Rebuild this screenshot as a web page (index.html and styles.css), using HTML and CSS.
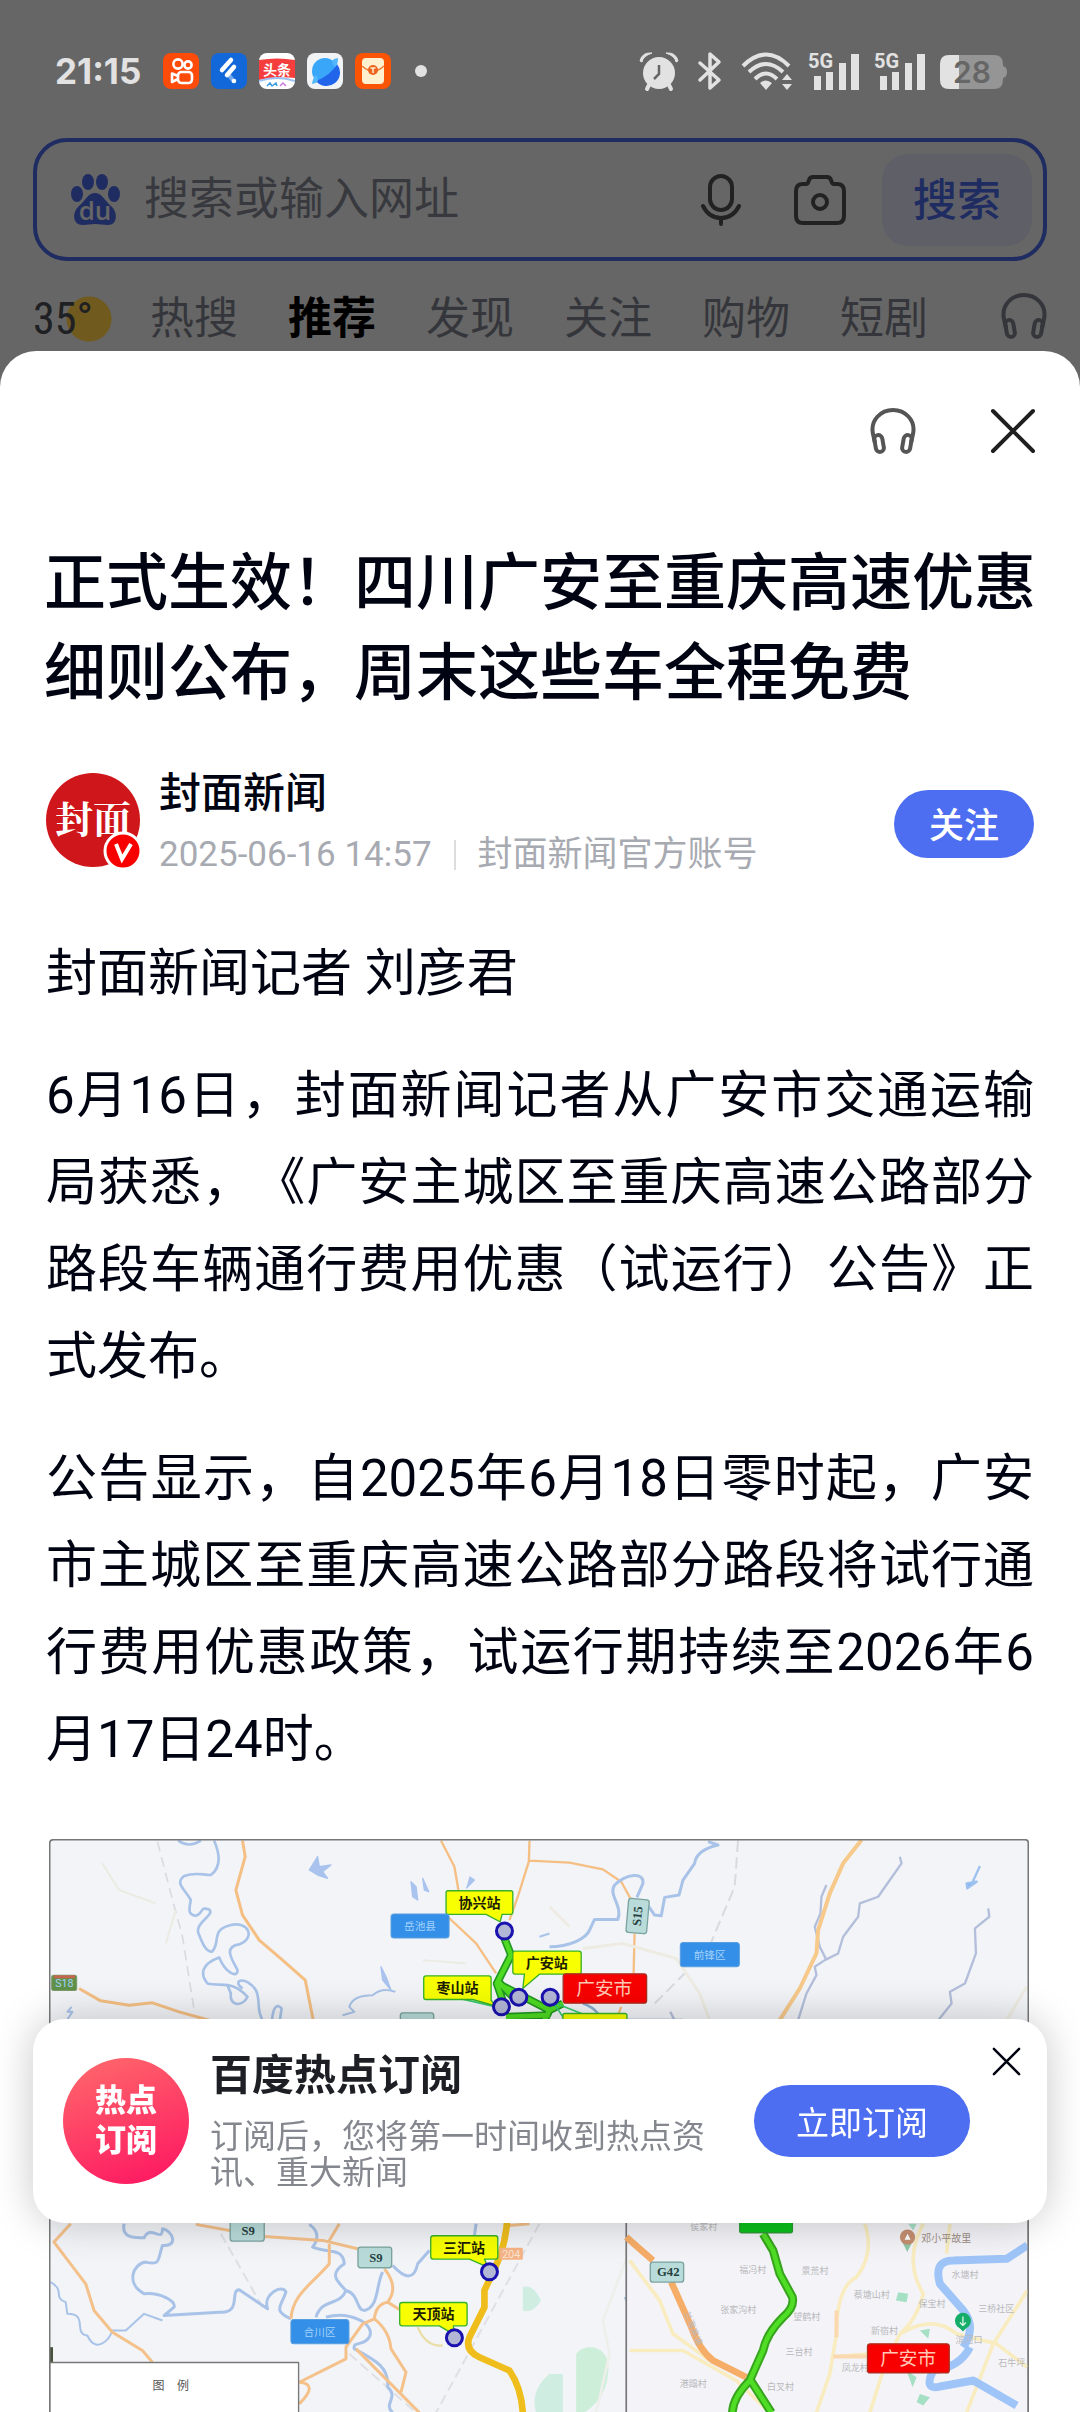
FILE: index.html
```html
<!DOCTYPE html>
<html lang="zh-CN">
<head>
<meta charset="UTF-8" />
<meta name="viewport" content="width=device-width, initial-scale=1" />
<title>正式生效！四川广安至重庆高速优惠细则公布</title>
<link rel="stylesheet" href="styles.css">
</head>
<body>

<svg class="defs" aria-hidden="true">
  <symbol id="headphones" viewBox="0 0 46 46">
    <path d="M5 35 L3 26 C0 12 11 2 23 2 C35 2 46 12 43 26 L41 35" fill="none" stroke="currentColor" stroke-width="4"/>
    <rect x="5" y="27" width="8" height="17" rx="4" fill="none" stroke="currentColor" stroke-width="4" transform="rotate(-10 9 35)"/>
    <rect x="33" y="27" width="8" height="17" rx="4" fill="none" stroke="currentColor" stroke-width="4" transform="rotate(10 37 35)"/>
  </symbol>
  <symbol id="close" viewBox="0 0 46 46">
    <path d="M3 3 L43 43 M43 3 L3 43" fill="none" stroke="currentColor" stroke-width="4" stroke-linecap="round"/>
  </symbol>
</svg>

<!-- status bar -->
<div class="statusbar">
  <span class="clock">21:15</span>
  <div class="notifications">
    <svg viewBox="0 0 36 36"><rect width="36" height="36" rx="8" fill="#ff4b0a"/><g fill="none" stroke="#fff" stroke-width="2.6"><circle cx="15" cy="11" r="4.6"/><circle cx="25" cy="12" r="3.6"/><rect x="15" y="19" width="14" height="11" rx="3.5"/><path d="M15 23 L9 20.500 V29 L15 26" stroke-linejoin="round"/></g></svg>
    <svg viewBox="0 0 36 36"><rect width="36" height="36" rx="8" fill="#1268d8"/><path d="M18 22 L23 29" stroke="#75a9ee" stroke-width="4"/><g stroke="#fff" stroke-width="4.500" stroke-linecap="round"><path d="M20 7 L11 17 M23 14 L16 22"/><path d="M23 28 L23 28"/></g></svg>
    <svg viewBox="0 0 36 36"><rect width="36" height="36" rx="8" fill="#fff"/><path d="M0 7 Q18 4 36 7 V25 Q18 23 0 27 Z" fill="#f63d3d"/><path d="M0 28 Q18 22 36 28" fill="none" stroke="#9cc3f6" stroke-width="2"/><text x="18" y="22" class="toutiao">头条</text><path d="M8 33 l3 -3 l2 3 l4 -3 l1 3" fill="none" stroke="#3d9be0" stroke-width="1.500"/><path d="M21 33 l3 -3 l3 3" fill="none" stroke="#c87be0" stroke-width="1.500"/></svg>
    <svg viewBox="0 0 36 36"><rect width="36" height="36" rx="8" fill="#f1f3f5"/><circle cx="18" cy="18" r="13" fill="#3aa6fa"/><path d="M9 28 Q24 22 30 11 A13 13 0 0 1 9 28" fill="#2166ea"/><path d="M5 31 Q6 24 9 22 Q13 27 9 30 Z M31 5 Q31 12 28 14 Q23 9 27 6 Z" fill="#52b8fb"/></svg>
    <svg viewBox="0 0 36 36"><rect width="36" height="36" rx="8" fill="#fb5405"/><rect x="7" y="5" width="22" height="26" rx="4" fill="#fff0cf"/><path d="M7 13 Q18 23 29 13" fill="none" stroke="#f07a35" stroke-width="1.500"/><circle cx="18" cy="17" r="5" fill="#ee6420"/><path d="M15.500 15h5M18 15v5" stroke="#fff0cf" stroke-width="1.500"/></svg>
  </div>
  <span class="more-dot"></span>
  <div class="system-icons">
    <svg class="icon-alarm" viewBox="0 0 38 38" fill="currentColor"><circle cx="19" cy="21" r="16"/><path d="M0 9 Q2 0 12 1 Q3 4 2 10 Z M38 9 Q36 0 26 1 Q35 4 36 10 Z" stroke="currentColor" stroke-width="1"/><path d="M9 33 L7 37 M29 33 L31 37" stroke="currentColor" stroke-width="4" stroke-linecap="round"/><path d="M19 13 V22 L14 27" fill="none" stroke="#666" stroke-width="2.500"/></svg>
    <svg class="icon-bluetooth" viewBox="0 0 33 38"><path d="M7 11 L26 28 L17 36 V2 L26 10 L7 28" fill="none" stroke="currentColor" stroke-width="3.500" stroke-linejoin="round" stroke-linecap="round"/></svg>
    <svg class="icon-wifi" viewBox="0 0 52 38"><g fill="none" stroke="currentColor" stroke-width="4"><path d="M2 14 Q25 -9 48 14"/><path d="M8 20 Q25 4 42 20"/><path d="M14 27 Q25 16 36 27"/></g><path d="M19 31 Q25 26 31 31 L25 38 Z M41 28 L46 22 L51 28 Z M41 32 L46 38 L51 32 Z" fill="currentColor"/></svg>
    <svg class="icon-signal" viewBox="0 0 51 38"><path d="M6 24h7v14H6z M18 20h7v18h-7z M31 11h7v27h-7z M43 2h8v36h-8z" fill="currentColor"/><text x="0" y="16" class="signal-text">5G</text></svg>
    <svg class="icon-signal" viewBox="0 0 51 38"><path d="M6 24h7v14H6z M18 20h7v18h-7z M31 11h7v27h-7z M43 2h8v36h-8z" fill="currentColor"/><text x="0" y="16" class="signal-text">5G</text></svg>
    <svg class="icon-battery" viewBox="0 0 67 38"><path d="M10 3 H54 Q63 3 63 12 V14 Q67 15 67 20 Q67 25 63 26 V28 Q63 37 54 37 H10 Z" fill="#959595"/><path d="M19 3 H9 Q0 3 0 12 V28 Q0 37 9 37 H19 Z" fill="#e2e2e2"/><text x="32" y="31" class="battery-text">28</text></svg>
  </div>
</div>

<!-- home page behind the sheet -->
<form class="search">
  <svg class="logo" viewBox="0 0 49 51" fill="#1f2c61">
    <ellipse cx="6" cy="20" rx="6" ry="8"/><ellipse cx="17" cy="8" rx="6" ry="8"/><ellipse cx="31" cy="8" rx="6" ry="8"/><ellipse cx="43" cy="20" rx="6" ry="8"/>
    <path d="M24 19 C31 19 34 27 40 32 C47 38 47 51 37 51 C32 51 29 50 24 50 C20 50 16 51 12 51 C1 51 1 38 8 32 C15 26 17 19 24 19 Z"/>
    <text x="24" y="46" class="logo-text">du</text>
  </svg>
  <input class="search-input" type="text" placeholder="搜索或输入网址" aria-label="搜索或输入网址">
  <button class="icon-btn mic" type="button" aria-label="语音搜索">
    <svg viewBox="0 0 40 52" fill="none" stroke="#222" stroke-width="4" stroke-linecap="round"><rect x="9" y="2" width="22" height="34" rx="11"/><path d="M2 32 Q8 44 20 44 Q32 44 38 32 M20 44 V50"/></svg>
  </button>
  <button class="icon-btn camera" type="button" aria-label="拍照搜索">
    <svg viewBox="0 0 52 52" fill="none" stroke="#222" stroke-width="4" stroke-linejoin="round"><path d="M9 10 H12 Q14 10 15 6 Q16 3 19 3 H33 Q36 3 37 6 Q38 10 40 10 H43 Q50 10 50 17 V42 Q50 49 43 49 H9 Q2 49 2 42 V17 Q2 10 9 10 Z"/><circle cx="26" cy="28" r="7"/></svg>
  </button>
  <button class="search-btn" type="button">搜索</button>
</form>

<nav class="tabs">
  <a class="weather" href="#">35<span class="degree">°</span></a>
  <a href="#">热搜</a>
  <a class="active" href="#">推荐</a>
  <a href="#">发现</a>
  <a href="#">关注</a>
  <a href="#">购物</a>
  <a href="#">短剧</a>
  <button class="icon-btn listen" type="button" aria-label="听"><svg><use href="#headphones"/></svg></button>
</nav>

<main class="sheet">
  <div class="sheet-actions">
    <button class="icon-btn" type="button" aria-label="听文章"><svg class="grey"><use href="#headphones"/></svg></button>
    <button class="icon-btn" type="button" aria-label="关闭"><svg><use href="#close"/></svg></button>
  </div>

  <h1>正式生效！四川广安至重庆高速优惠细则公布，周末这些车全程免费</h1>

  <div class="author">
    <div class="avatar">封面
      <svg class="verified" viewBox="0 0 40 40"><circle cx="20" cy="20" r="18" fill="#f80000" stroke="#fff" stroke-width="3"/><path d="M13 13 L19 28 L28 13" fill="none" stroke="#fff" stroke-width="4"/></svg>
    </div>
    <div class="author-info">
      <strong>封面新闻</strong>
      <div class="meta"><time>2025-06-16 14:57</time><span class="account">封面新闻官方账号</span></div>
    </div>
    <button class="follow" type="button">关注</button>
  </div>

  <article>
    <p>封面新闻记者 刘彦君</p>
    <p>6月16日，封面新闻记者从广安市交通运输局获悉，《广安主城区至重庆高速公路部分路段车辆通行费用优惠（试运行）公告》正式发布。</p>
    <p>公告显示，自2025年6月18日零时起，广安市主城区至重庆高速公路部分路段将试行通行费用优惠政策，试运行期持续至2026年6月17日24时。</p>
  </article>

  <div class="map">
    <svg viewBox="0 0 2937 1719" preserveAspectRatio="xMidYMin slice" role="img" aria-label="广安至重庆高速路线图">
      <rect width="2937" height="1719" fill="#f2f4f8"/>

      <!-- north west -->
      <g transform="translate(-60 -57)" fill="none" stroke-linejoin="round">
        <path d="M385 65 L425 220 L460 350 L495 570" stroke="#dadbe0" stroke-width="5" stroke-dasharray="30 18"/>
        <path d="M220 130 L270 210 L380 250 M410 370 L440 270 M1180 420 L1310 430" stroke="#ecebe2" stroke-width="6"/>
        <g stroke="#a9c3e8" stroke-width="8">
          <path d="M447 62 Q480 85 515 62 M555 62 C580 120 565 150 545 165 C520 165 500 155 465 168 C435 190 470 210 485 240 C480 265 475 285 500 287 C525 280 510 258 540 268 C560 285 490 310 510 345 C520 370 530 395 548 395 C575 370 545 330 600 316 C660 300 680 355 630 373 C580 380 610 420 625 450 C625 475 590 460 570 412 C520 430 510 460 535 490 C580 500 610 480 655 530 C640 560 600 560 605 520 L595 495 M640 505 C605 480 650 465 680 510 C695 540 680 565 700 600 M728 600 Q735 540 757 565 L752 600"/>
          <path d="M1098 515 Q1060 500 1030 525 Q970 525 960 560 L975 575 L940 585 M128 560 L115 575 L130 575 L115 598 M1530 350 L1560 340" stroke-width="6"/>
        </g>
        <path d="M840 150 L865 110 L870 140 L905 135 L880 155 L895 175 L865 165 Z M1145 185 L1150 230 L1165 240 L1160 200 Z M1180 175 L1198 215 L1185 210 Z M1055 440 L1060 480 L1085 510 L1070 470 Z M1320 170 L1335 180 L1310 205" fill="#a9c3ee" stroke="#a9c3ee" stroke-width="4"/>
        <g stroke="#f5bf83" stroke-width="9">
          <path d="M640 62 L648 110 L620 210 L640 285 L690 360 L760 420 L828 480 L852 600 M150 505 L215 542 L300 555 L370 548 L450 575 L540 600"/>
          <path d="M1235 62 L1275 140 L1287 210 M1500 62 L1498 125 L1465 230 L1440 300 M1500 122 L1620 128 L1720 148 L1775 185 L1805 240 M1255 290 L1340 370 L1400 460 M1815 340 L1812 460 M1775 560 L1760 598" stroke-width="7"/>
        </g>
        <rect x="68" y="465" width="75" height="46" rx="6" fill="#5f9148" stroke="#7c9b6b" stroke-width="3"/><path d="M74 470 H138" stroke="#c3664d" stroke-width="9"/>
      </g>

      <!-- north east -->
      <g transform="translate(1500 -57)" fill="none" stroke-linejoin="round">
        <path d="M565 62 L555 200 L485 365 M410 455 L315 550" stroke="#d9dae0" stroke-width="6" stroke-dasharray="34 16"/>
        <path d="M100 385 L220 370 L380 415 L450 520 L480 600 M0 260 L60 320 M1430 500 L1370 600" stroke="#eeece2" stroke-width="9"/>
        <path d="M0 380 C60 380 110 355 120 330 L135 298 L205 298 C220 255 175 225 195 195 C230 160 285 155 280 190 L262 232 M290 248 L315 285 L335 287 L345 232 L388 225 L400 180 L435 130 Q440 90 505 75 L475 65" stroke="#a9c3e8" stroke-width="9"/>
        <path d="M1050 110 L1055 130 L1020 180 L985 230 L930 250 L925 290 L880 350 L865 400 L825 420 L795 440 L800 465 L770 520 L745 600 M830 195 L815 230 L812 280 L795 320 L810 380 L830 420 M1315 265 L1318 290 L1275 325 L1278 400 L1245 490 L1200 515 L1205 550 L1165 600 M362 575 L375 600" stroke="#b3bfda" stroke-width="7"/>
        <path d="M1290 138 L1266 190 M1280 185 L1252 205 L1250 190 Z" fill="#86b5ef" stroke="#9dc1ef" stroke-width="7"/>
        <path d="M935 60 L880 130 L840 220 L805 330 L800 400 L750 505 L690 600" stroke="#f7c98a" stroke-width="12"/>
        <path d="M100 550 Q130 560 145 580 M235 600 H400" stroke="#88aacb" stroke-width="8"/>
      </g>

      <!-- expressway and stations -->
      <g transform="translate(-60 -57)">
        <g fill="none" stroke-linejoin="round">
          <path d="M1425 355 L1445 405 L1402 490 L1430 570 M1402 480 L1450 530 M1405 490 L1560 570 L1600 550 M1430 590 L1560 585 M1560 570 L1540 610" stroke="#219821" stroke-width="24"/>
          <path d="M1425 355 L1445 405 L1402 490 L1430 570 M1402 480 L1450 530 M1405 490 L1560 570 L1600 550 M1430 590 L1560 585 M1560 570 L1540 610" stroke="#4fdb22" stroke-width="14"/>
          <path d="M1300 537 L1400 560 M1570 545 L1600 590 M1580 550 L1680 590" stroke="#36c86d" stroke-width="5"/>
        </g>
        <g fill="#f7ff00" stroke="#38b22a" stroke-width="4">
          <path d="M1256 212 H1444 Q1450 212 1450 218 V276 Q1450 283 1444 283 H1418 L1412 305 L1370 283 H1256 Q1250 283 1250 276 V218 Q1250 212 1256 212 Z"/>
          <path d="M1457 393 H1648 Q1655 393 1655 400 V455 Q1655 462 1648 462 H1530 L1480 505 L1485 462 H1457 Q1450 462 1450 455 V400 Q1450 393 1457 393 Z"/>
          <path d="M1190 467 H1378 Q1385 467 1385 474 V540 L1400 558 L1330 538 H1190 Q1183 538 1183 531 V474 Q1183 467 1190 467 Z"/>
          <rect x="1600" y="580" width="192" height="70" rx="6"/>
        </g>
        <g class="station">
          <circle cx="1425" cy="333" r="24"/><circle cx="1468" cy="531" r="24"/><circle cx="1416" cy="560" r="24"/><circle cx="1562" cy="531" r="24"/>
        </g>
        <g class="place">
          <rect x="1085" y="282" width="174" height="72" rx="9"/><rect x="1952" y="367" width="177" height="73" rx="9"/>
        </g>
        <g class="road-sign">
          <rect x="1793" y="237" width="62" height="102" rx="8" transform="rotate(5 1824 288)"/><rect x="1113" y="578" width="100" height="60" rx="8"/>
        </g>
        <rect x="1601" y="461" width="250" height="88" rx="8" fill="#f80000" stroke="#a83020" stroke-width="4"/>
        <text x="1350" y="263" class="station-name">协兴站</text>
        <text x="1552" y="443" class="station-name">广安站</text>
        <text x="1284" y="518" class="station-name">枣山站</text>
        <text x="1724" y="525" class="city-name">广安市</text>
        <text x="1172" y="330" class="place-name">岳池县</text>
        <text x="2040" y="416" class="place-name">前锋区</text>
        <text x="106" y="500" class="place-name">S18</text>
        <text x="1824" y="300" class="sign-text" transform="rotate(-85 1824 288)">S15</text>
      </g>

      <!-- south west -->
      <g transform="translate(-60 483)" fill="none" stroke-linejoin="round">
        <path d="M575 700 L700 920 M1530 670 L1220 1236 M960 1060 L1160 1236" stroke="#dfe0e4" stroke-width="6" stroke-dasharray="30 15"/>
        <path d="M1480 860 Q1510 850 1535 900 Q1510 940 1480 930 Z M1560 1120 Q1500 1170 1520 1236 H1600 V1120 Z" fill="#cfeee1"/>
        <path d="M1640 1060 C1670 1020 1750 1040 1735 1120 C1730 1200 1660 1250 1640 1236 Z" fill="#cdeed9"/>
        <path d="M1830 670 L1720 960 L1740 1060 L1700 1236" stroke="#eeeeeb" stroke-width="8"/>
        <g stroke="#a9c3e8" stroke-width="9">
          <path d="M285 670 C275 720 330 710 345 712 C365 670 400 730 400 685 C430 690 450 740 400 735 C385 780 395 795 350 785 C310 790 290 850 345 880 C390 875 440 900 435 920 L405 945 L570 935 C640 940 600 870 630 868 L715 925 C700 880 760 850 770 875 C755 920 730 930 785 955"/>
          <path d="M840 672 Q880 700 850 740 C900 760 940 740 945 790 C900 820 920 840 950 870 C930 920 880 890 860 950 M950 870 C990 880 980 930 1005 930 C1050 920 1040 850 1060 815 M1090 795 Q1150 860 1165 790 L1200 750 M1340 670 L1335 705"/>
          <path d="M890 950 C960 930 1040 970 1020 1010 C1000 1040 970 1020 975 1045 C1040 1080 1080 1100 1075 1160 C1110 1190 1060 1210 1090 1236"/>
          <path d="M65 845 C110 870 70 890 110 905 L115 940 C180 940 130 1000 175 1005 C200 1060 240 1020 250 990 L290 990 L345 940 L400 960 M1810 858 L1825 850 L1840 830 M1785 890 L1800 920" stroke-width="6"/>
        </g>
        <g stroke="#f5c18a" stroke-width="9">
          <path d="M125 670 L75 725 L170 850 L195 930 L250 995 L340 1050 L370 1085 M500 672 L610 692 M705 708 L880 720 L985 745 M930 670 L900 720 L900 790 C850 850 790 880 785 955 M1065 805 Q1110 860 1075 905 Q1040 910 1035 955 L1000 970 L950 1040 V1075 L810 1145 M1075 905 L1115 930 M1035 955 Q1080 990 1085 1045 L1130 1115 L1115 1175 M980 1045 L1170 1236 M810 1145 Q870 1150 810 1210 M1440 675 L1500 670"/>
        </g>
        <path d="M1165 980 Q1190 1040 1240 1035" stroke="#eadda6" stroke-width="7"/>
        <path d="M1435 640 Q1430 730 1400 795 L1365 870 V920 L1320 1010 Q1305 1050 1350 1070 L1440 1110 Q1475 1160 1480 1236" stroke="#f0be1c" stroke-width="20"/>
        <rect x="1410" y="742" width="70" height="36" rx="4" fill="#f6b486"/>
        <g class="road-sign"><rect x="603" y="650" width="102" height="72" rx="8"/><rect x="986" y="740" width="101" height="62" rx="8"/></g>
        <g class="place"><rect x="785" y="957" width="174" height="73" rx="9"/></g>
        <g fill="#f7ff00" stroke="#38b22a" stroke-width="4">
          <path d="M1212 706 H1398 Q1405 706 1405 713 V768 Q1405 776 1398 776 H1365 L1375 800 L1320 776 H1212 Q1204 776 1204 768 V713 Q1204 706 1212 706 Z"/>
          <path d="M1119 906 H1306 Q1313 906 1313 913 V969 Q1313 976 1306 976 H1272 L1275 1003 L1230 976 H1119 Q1111 976 1111 969 V913 Q1111 906 1119 906 Z"/>
        </g>
        <g class="station"><circle cx="1380" cy="814" r="24"/><circle cx="1275" cy="1012" r="24"/></g>
        <path d="M66 1040 V1086" stroke="#46523c" stroke-width="12"/>
        <rect x="62" y="1086" width="746" height="170" fill="#fff" stroke="#777" stroke-width="4"/>
      </g>
      <g transform="translate(-60 483)">
        <text x="1304" y="757" class="station-name">三汇站</text>
        <text x="1212" y="957" class="station-name">天顶站</text>
        <text x="657" y="703" class="sign-text">S9</text>
        <text x="1040" y="784" class="sign-text">S9</text>
        <text x="871" y="1006" class="place-name">合川区</text>
        <text x="388" y="1168" class="legend-text">图</text>
        <text x="462" y="1168" class="legend-text">例</text>
        <text x="1445" y="772" class="route-text">204</text>
      </g>

      <!-- inset of the city -->
      <g transform="translate(1500 483)" fill="none" stroke-linejoin="round">
        <rect x="230" y="600" width="1205" height="660" fill="#f4f4f8" stroke="#777" stroke-width="5"/>
        <g stroke="#f8ecc0" stroke-width="11">
          <path d="M945 670 Q975 760 920 830 Q860 860 860 1000 L840 1120 L800 1236 M1120 670 Q1060 780 1120 880 Q1100 960 1050 1000 L1000 1110 L960 1236 M240 780 L330 900 L370 1000 L480 1080 M240 1050 L400 1050 L560 1140 L660 1236 M1050 1000 Q1150 940 1220 1000 L1340 1030 L1432 1100 M1432 870 L1330 1030 L1250 1236 M860 1068 L960 1060 M1200 670 L1190 760"/>
        </g>
        <path d="M860 930 V1010 M850 1068 H950" stroke="#fad8b0" stroke-width="12"/>
        <path d="M1432 735 L1370 775 L1210 780 Q1150 780 1170 850 L1240 930 Q1280 980 1240 1040 M1260 1040 Q1230 1100 1150 1110 Q1120 1170 1170 1158 L1270 1140 L1400 1215" stroke="#9fc5f8" stroke-width="24"/>
        <path d="M1045 875 L1075 880 L1070 905 L1038 900 Z M1110 990 L1140 985 L1135 1015 Z M1070 1110 L1100 1130 L1088 1160 Z M1110 1180 L1140 1190 L1120 1215 L1100 1205 Z M1075 670 H1100 L1090 690 Z" fill="#a5dfc4"/>
        <path d="M230 710 L310 780 M365 845 L425 980 Q450 1050 490 1080 L590 1130" stroke="#f6ad68" stroke-width="20"/>
        <path d="M640 700 L670 750 L690 820 L728 890 Q735 920 700 950 Q650 1000 640 1050 L600 1140 Q550 1190 548 1236 M600 1135 L665 1236" stroke="#36a41c" stroke-width="26"/>
        <path d="M640 700 L670 750 L690 820 L728 890 Q735 920 700 950 Q650 1000 640 1050 L600 1140 Q550 1190 548 1236 M600 1135 L665 1236" stroke="#4fdd25" stroke-width="14"/>
        <rect x="570" y="640" width="158" height="57" rx="6" fill="#0bc11c" stroke="#2d9b35" stroke-width="4"/>
        <g class="road-sign"><rect x="302" y="785" width="100" height="60" rx="8"/></g>
        <path d="M1055 720 L1072 755 L1090 720 Z" fill="#8ec7a8"/><circle cx="1073" cy="710" r="23" fill="#c58f72"/><path d="M1064 718 L1073 700 L1082 718 Z" fill="#fff"/>
        <path d="M1222 975 L1239 993 L1256 975 Z" fill="#15ad68"/><circle cx="1239" cy="961" r="24" fill="#15ad68"/><path d="M1239 948 V974 M1230 966 L1239 975 L1248 966" stroke="#d9f6e6" stroke-width="4"/>
      </g>
      <g transform="translate(1500 483)" class="village">
        <text x="462" y="690">侯家村</text><text x="609" y="818">福冯村</text><text x="796" y="822">景荒村</text>
        <text x="566" y="938">张家沟村</text><text x="771" y="958">望鹤村</text><text x="748" y="1062">三台村</text>
        <text x="431" y="1160">港蹋村</text><text x="692" y="1168">白叉村</text><text x="966" y="894">蔡塘山村</text>
        <text x="1146" y="920">保宝村</text><text x="1245" y="832">水塘村</text><text x="1339" y="935">三桥社区</text>
        <text x="1004" y="1000">新宿村</text><text x="1257" y="1028">滨河口</text><text x="916" y="1110">凤龙村</text>
        <text x="1385" y="1095">石牛坪</text>
        <text x="426" y="990" transform="rotate(68 426 985)">兰海高速</text>
        <text x="1189" y="725" class="landmark">邓小平故里</text>
      </g>
      <g transform="translate(1500 483)">
        <rect x="953" y="1030" width="245" height="87" rx="8" fill="#f80000" stroke="#a83020" stroke-width="4"/>
        <text x="356" y="826" class="sign-text">G42</text>
        <text x="1075" y="1093" class="city-name">广安市</text>
      </g>
      <path d="M2 1719 V14 Q2 2 14 2 H2925 Q2935 2 2935 12 V1719" fill="none" stroke="#777" stroke-width="5"/>
    </svg>
  </div>
</main>

<!-- subscribe popup -->
<aside class="popup">
  <div class="popup-logo">热点<br>订阅</div>
  <div class="popup-text">
    <h2>百度热点订阅</h2>
    <p>订阅后，您将第一时间收到热点资讯、重大新闻</p>
  </div>
  <button class="subscribe" type="button">立即订阅</button>
  <button class="icon-btn popup-close" type="button" aria-label="关闭"><svg><use href="#close"/></svg></button>
</aside>

</body>
</html>
```
FILE: styles.css
```css
* {
  box-sizing: border-box;
}

body {
  margin: 0;
  height: 100vh;
  overflow: hidden;
  display: flex;
  flex-direction: column;
  background: #666;
  color: #000311;
  font-family: Roboto, "Noto Sans CJK SC", sans-serif;
  text-spacing-trim: space-all;
}

button, input {
  font-family: inherit;
  border: none;
  padding: 0;
  background: none;
  color: inherit;
}

a {
  color: inherit;
  text-decoration: none;
}

svg {
  display: block;
}

.defs {
  position: absolute;
  width: 0;
  height: 0;
}

.icon-btn svg {
  width: 46px;
  height: 46px;
}

/* status bar */
.statusbar {
  display: flex;
  align-items: center;
  height: 138px;
  padding: 50px 73px 46px 55px;
  color: #e2e2e2;
}

.clock {
  width: 108px;
  font-family: Inter, sans-serif;
  font-size: 35px;
  font-weight: 700;
  line-height: 42px;
}

.notifications {
  display: flex;
  gap: 12px;
}

.notifications svg {
  width: 36px;
  height: 36px;
}

.toutiao {
  font-size: 14px;
  font-weight: 700;
  fill: #fff;
  text-anchor: middle;
}

.more-dot {
  width: 12px;
  height: 12px;
  margin-left: 24px;
  border-radius: 50%;
  background: #e2e2e2;
}

.system-icons {
  display: flex;
  gap: 15px;
  margin-left: auto;
}

.system-icons svg {
  height: 38px;
  overflow: visible;
}

.icon-alarm {
  width: 38px;
}

.icon-bluetooth {
  width: 33px;
}

.icon-wifi {
  width: 52px;
}

.icon-signal {
  width: 51px;
}

.icon-battery {
  width: 67px;
}

.signal-text {
  font-size: 20px;
  font-weight: 700;
  fill: #e2e2e2;
}

.battery-text {
  font-family: Inter, sans-serif;
  font-size: 30px;
  font-weight: 600;
  fill: #666;
  text-anchor: middle;
}

/* search box */
.search {
  display: flex;
  align-items: center;
  height: 123px;
  margin: 0 33px;
  padding: 0 11px 0 34px;
  border: 4px solid #1f2c61;
  border-radius: 34px;
}

.logo {
  width: 49px;
  height: 51px;
  overflow: visible;
}

.logo-text {
  font-family: "Open Sans", sans-serif;
  font-size: 26px;
  font-weight: 600;
  fill: #666;
  text-anchor: middle;
}

.search-input {
  flex: 1;
  min-width: 0;
  margin-left: 24px;
  font-size: 45px;
  outline: none;
}

.search-input::placeholder {
  color: #38393e;
  opacity: 1;
}

.mic svg {
  width: 40px;
  height: 52px;
}

.camera {
  margin: 0 36px 0 53px;
}

.camera svg {
  width: 52px;
  height: 52px;
}

.search-btn {
  width: 150px;
  height: 92px;
  padding-bottom: 6px;
  border-radius: 26px;
  background: #5f6067;
  color: #1f2c61;
  font-size: 44px;
  font-weight: 500;
}

/* channel tabs */
.tabs {
  display: flex;
  align-items: center;
  gap: 50px;
  height: 90px;
  padding: 26px 33px 0;
  color: #35363b;
  font-size: 44px;
  line-height: 66px;
}

.tabs .active {
  color: #000;
  font-weight: 700;
}

.weather {
  width: 80px;
  margin-right: -13px;
  color: #1f2023;
  font-family: "Roboto Condensed", "Liberation Sans Narrow", Roboto, sans-serif;
  font-size: 44px;
  background: radial-gradient(circle at 56px 33px, #715a1e 22px, transparent 23px);
  white-space: nowrap;
}

.degree {
  font-family: Roboto, sans-serif;
}

.listen {
  margin-left: auto;
  margin-bottom: 6px;
}

/* article sheet */
.sheet {
  flex: 1;
  min-height: 0;
  display: flex;
  flex-direction: column;
  padding: 0 46px;
  border-radius: 36px 36px 0 0;
  background: #fff;
}

.sheet-actions {
  display: flex;
  justify-content: flex-end;
  gap: 74px;
  margin-right: -2px;
  padding: 57px 0 85px;
  color: #1f1f1f;
}

.grey {
  color: #555;
}

h1 {
  margin: 0 -2px 54px;
  font-size: 62px;
  line-height: 90px;
  font-weight: 500;
}

.author {
  display: flex;
  align-items: flex-start;
  margin-bottom: 57px;
}

.avatar {
  position: relative;
  width: 94px;
  height: 94px;
  border-radius: 50%;
  background: #cf161a;
  color: #fff;
  font-family: "Liberation Serif", "Noto Serif CJK SC", "Noto Sans CJK SC", serif;
  font-size: 38px;
  font-weight: 700;
  line-height: 94px;
  text-align: center;
}

.verified {
  position: absolute;
  right: -3px;
  bottom: -4px;
  width: 40px;
  height: 40px;
}

.author-info {
  margin-left: 19px;
}

.author-info strong {
  display: block;
  font-size: 42px;
  line-height: 42px;
  font-weight: 500;
}

.meta {
  display: flex;
  align-items: center;
  margin-top: 22px;
  color: #a8aab2;
  font-size: 35px;
  line-height: 36px;
}

.account {
  margin-left: 22px;
  padding-left: 24px;
  background: linear-gradient(#ddd, #ddd) left center / 2px 30px no-repeat;
}

.follow {
  width: 140px;
  height: 68px;
  margin: 17px 0 0 auto;
  padding-bottom: 4px;
  border-radius: 34px;
  background: #4e6ef2;
  color: #fff;
  font-size: 35px;
  font-weight: 500;
}

article p {
  margin: 0 0 35px;
  font-size: 51px;
  line-height: 87px;
  text-align: justify;
}

article p:last-child {
  margin-bottom: 56px;
}

.map {
  flex: 1;
  min-height: 0;
  margin: 0 5px 0 3px;
  overflow: hidden;
}

.map svg {
  width: 100%;
}

.map text {
  text-anchor: middle;
}

.station {
  fill: #b3b7d6;
  stroke: #1a12ae;
  stroke-width: 9px;
}

.place {
  fill: #338fe8;
  stroke: #5a9ede;
  stroke-width: 3px;
}

.road-sign {
  fill: #b9dcda;
  stroke: #7ba39f;
  stroke-width: 4px;
}

.station-name {
  font-size: 42px;
  font-weight: 700;
  fill: #1c1c00;
}

.city-name {
  font-size: 56px;
  fill: #ffc9b5;
}

.place-name {
  font-size: 32px;
  fill: #a5d2fa;
}

.route-text {
  font-size: 32px;
  fill: #fde6d4;
}

.sign-text {
  font-family: "Liberation Serif", serif;
  font-size: 38px;
  font-weight: 700;
  fill: #263f40;
}

.legend-text {
  font-size: 36px;
  fill: #555;
}

.village {
  font-size: 27px;
  fill: #b9b9bc;
}

.landmark {
  font-size: 30px;
  fill: #9c8c82;
}

/* popup over the article */
.popup {
  position: fixed;
  left: 33px;
  right: 33px;
  bottom: 189px;
  display: flex;
  align-items: center;
  height: 204px;
  padding: 0 77px 0 30px;
  border-radius: 32px;
  background: #fff;
  box-shadow: 0 0 40px rgba(0, 0, 0, 0.22);
}

.popup-logo {
  flex: none;
  width: 126px;
  height: 126px;
  padding-top: 23px;
  border-radius: 50%;
  background: linear-gradient(160deg, #ff6b6b, #fd1361);
  color: #fff;
  font-size: 31px;
  font-weight: 900;
  line-height: 40px;
  text-align: center;
}

.popup-text {
  flex: 1;
  margin: 0 48px 0 21px;
}

.popup-text h2 {
  margin: 0 0 18px;
  color: #1e1f24;
  font-size: 42px;
  line-height: 50px;
}

.popup-text p {
  margin: 0;
  color: #85878f;
  font-size: 33px;
  line-height: 36px;
}

.subscribe {
  width: 216px;
  height: 72px;
  border-radius: 36px;
  background: #4e6ef2;
  color: #fff;
  font-size: 33px;
}

.popup-close {
  position: absolute;
  top: 28px;
  right: 26px;
}

.popup-close svg {
  width: 29px;
  height: 29px;
}
```
